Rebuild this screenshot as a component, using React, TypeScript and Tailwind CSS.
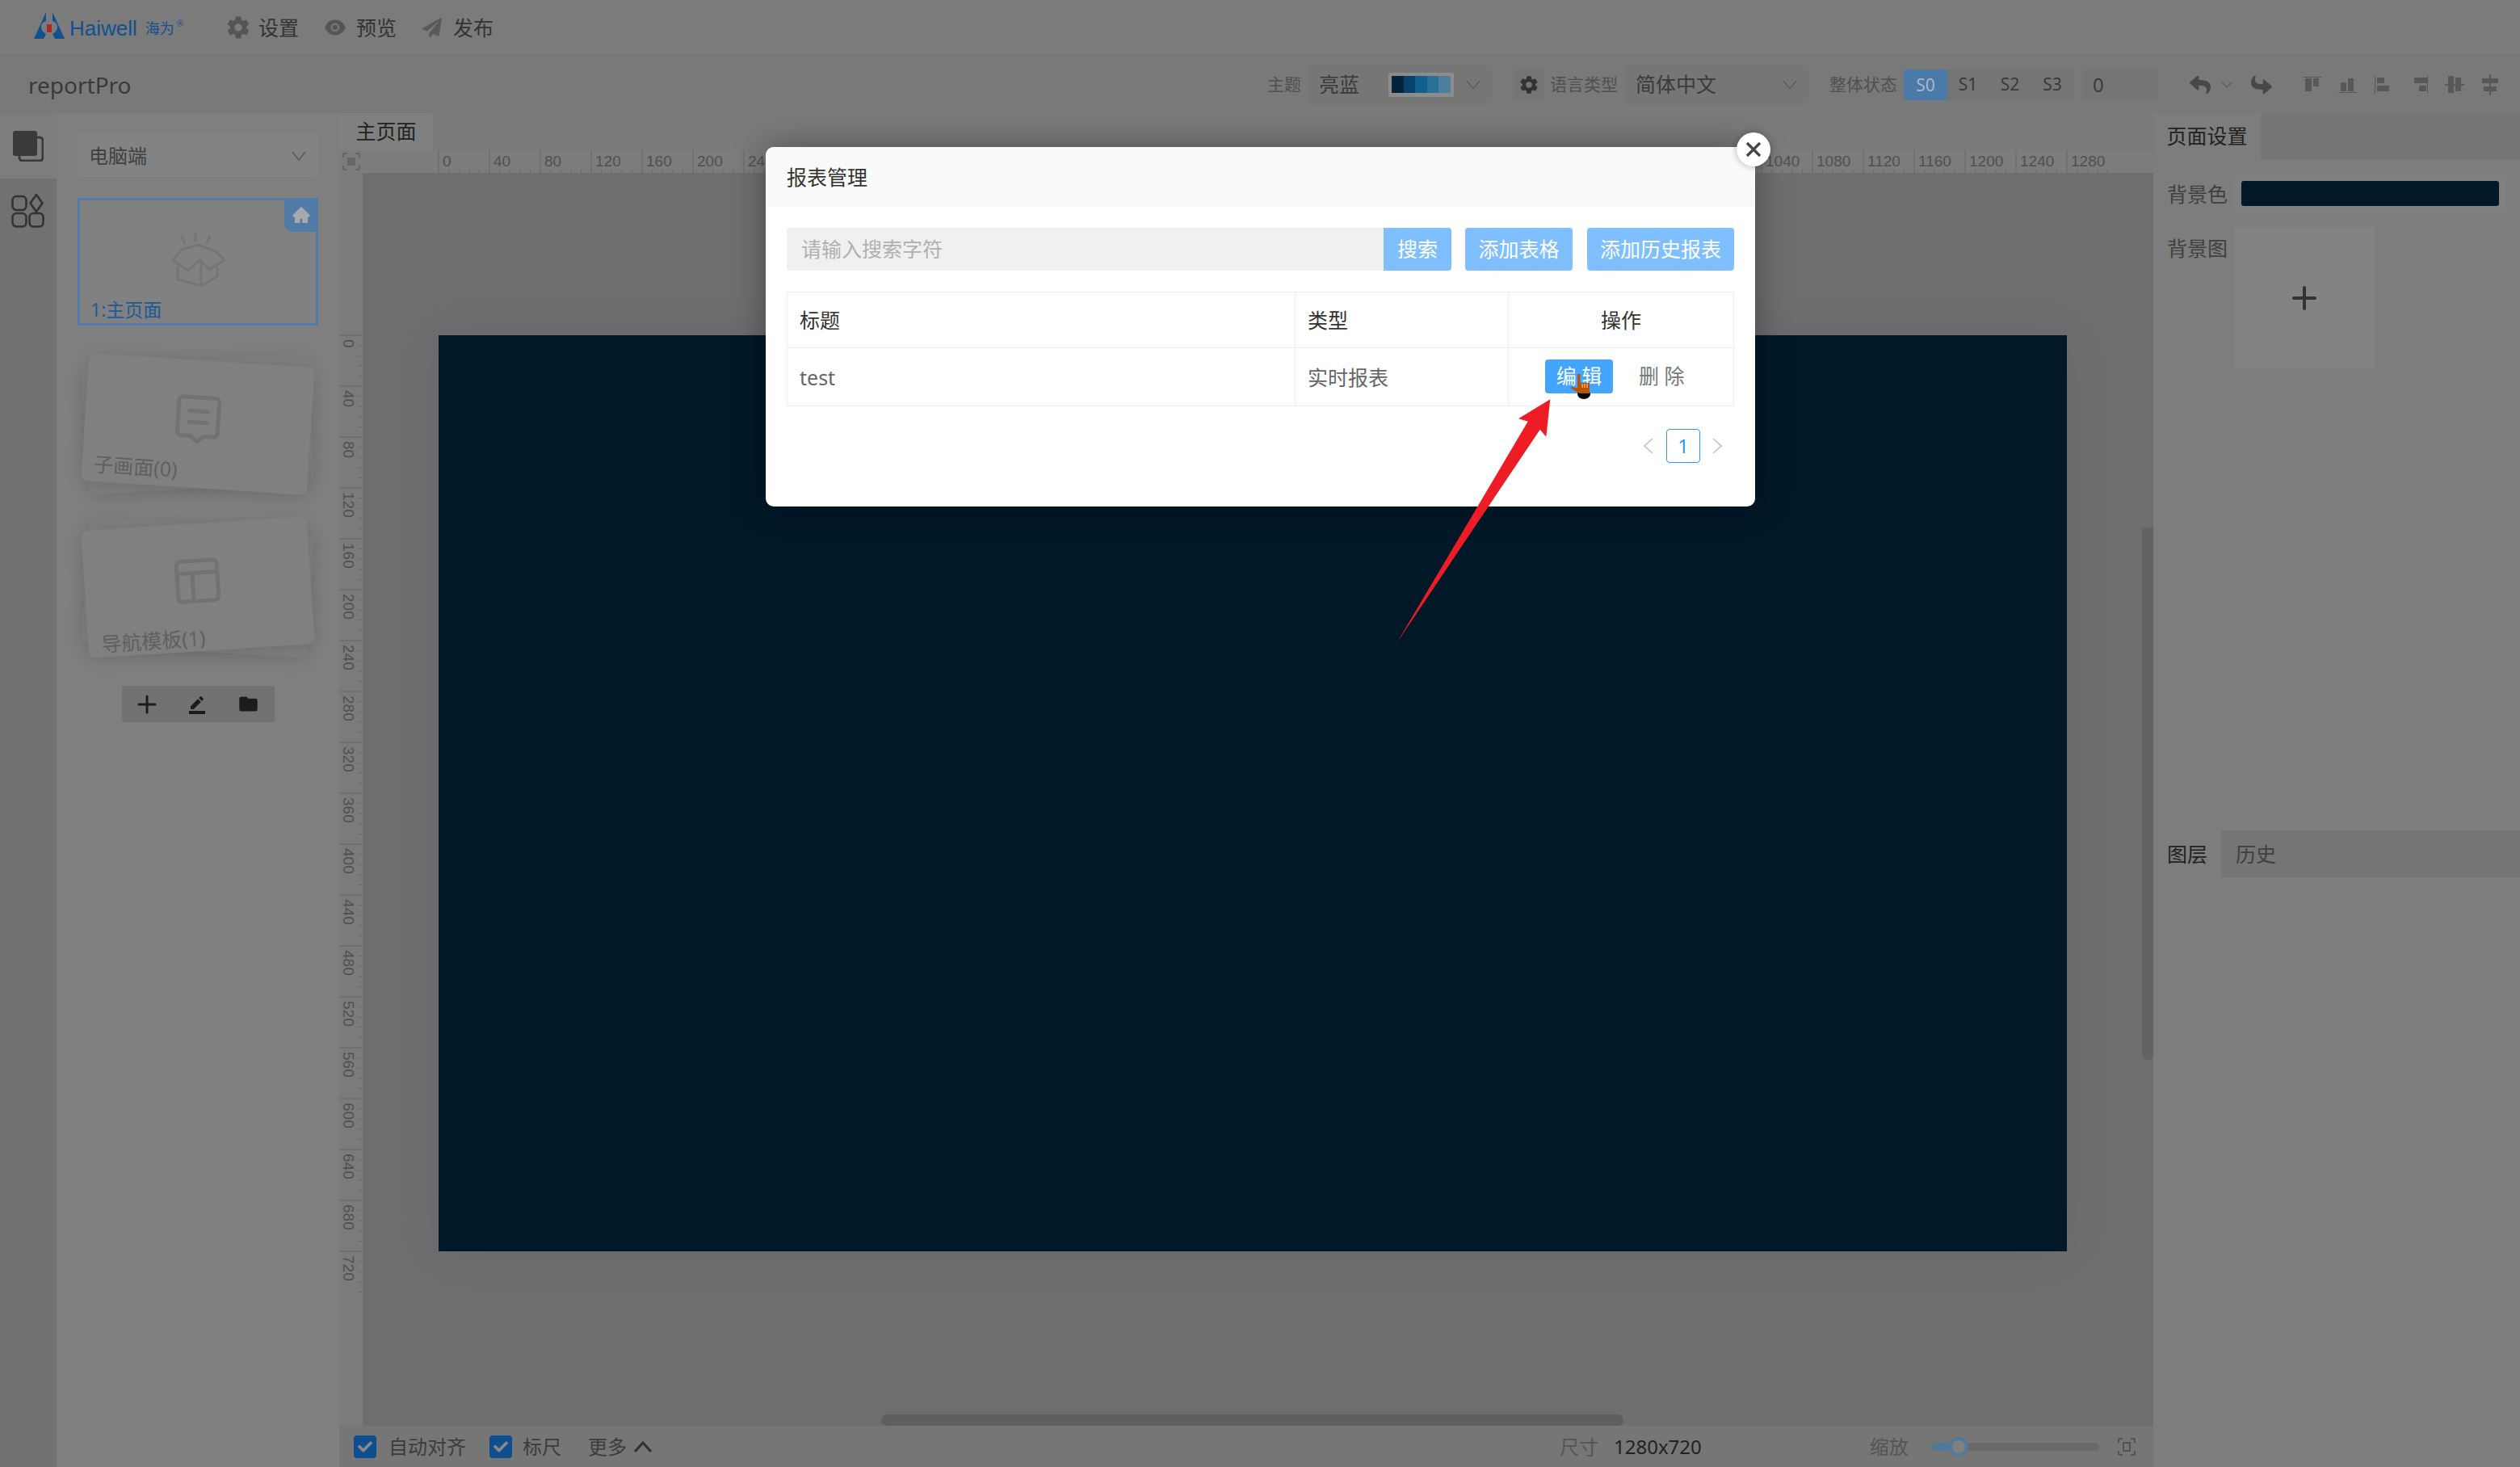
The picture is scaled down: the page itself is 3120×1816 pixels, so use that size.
import { AiFillEye, AiFillHome } from 'react-icons/ai';
import { FaPaperPlane, FaReply, FaCheck } from 'react-icons/fa';
import { IoSettingsSharp } from 'react-icons/io5';
import { MdBorderColor, MdFolder } from 'react-icons/md';

const H_LABELS = Array.from({ length: 33 }, (_, i) => i * 40);
const V_LABELS = Array.from({ length: 19 }, (_, i) => i * 40);
const STEP = 63;
const TICK = 12.6;

function Chevron({ className = '' }: { className?: string }) {
  return (
    <svg viewBox="0 0 18 12" className={`w-[18px] h-[12px] ${className}`} fill="none" stroke="currentColor" strokeWidth="1.6">
      <path d="M1 1l8 10 8-10" />
    </svg>
  );
}

function HorizontalRuler() {
  return (
    <svg width="2217" height="28" className="block">
      {H_LABELS.map((n, i) => {
        const x = 94 + i * STEP;
        return (
          <g key={n}>
            <line x1={x} x2={x} y1="0" y2="28" stroke="#666" />
            {[1, 2, 3, 4].map((t) => (
              <line key={t} x1={x + t * TICK} x2={x + t * TICK} y1="23" y2="28" stroke="#6a6a6a" />
            ))}
            <text x={x + 5} y="20" fontSize="19" fill="#505050" fontFamily="Liberation Sans">
              {n}
            </text>
          </g>
        );
      })}
    </svg>
  );
}

function VerticalRuler() {
  return (
    <svg width="29" height="1551" className="block">
      {V_LABELS.map((n, i) => {
        const y = 201 + i * STEP;
        return (
          <g key={n}>
            <line x1="0" x2="28" y1={y} y2={y} stroke="#666" />
            {[1, 2, 3, 4].map((t) => (
              <line key={t} x1="23" x2="28" y1={y + t * TICK} y2={y + t * TICK} stroke="#6a6a6a" />
            ))}
            <text transform={`translate(5 ${y + 5}) rotate(90)`} fontSize="19" fill="#505050" fontFamily="Liberation Sans">
              {n}
            </text>
          </g>
        );
      })}
    </svg>
  );
}

function FitIcon({ solid }: { solid?: boolean }) {
  return (
    <svg viewBox="0 0 22 22" className="w-[22px] h-[22px]" fill="none" stroke={solid ? '#5f5f5f' : '#4a4a4a'} strokeWidth="1.6">
      <path d="M1 6V2a1 1 0 011-1h4M16 1h4a1 1 0 011 1v4M21 16v4a1 1 0 01-1 1h-4M6 21H2a1 1 0 01-1-1v-4" />
      {solid ? <rect x="6" y="6" width="10" height="10" fill="#666" stroke="none" /> : <rect x="7" y="6" width="8" height="10" />}
    </svg>
  );
}

function AlignIcon({ kind }: { kind: number }) {
  const fill = '#585858';
  return (
    <svg viewBox="0 0 24 26" className="w-[24px] h-[26px]">
      {kind === 0 && (
        <g fill={fill}>
          <rect x="0" y="3" width="23" height="1" />
          <rect x="3" y="5" width="8" height="16" />
          <rect x="13" y="5" width="7" height="10" />
        </g>
      )}
      {kind === 1 && (
        <g fill={fill}>
          <rect x="0" y="22" width="23" height="1" />
          <rect x="3" y="10" width="7" height="11" />
          <rect x="12" y="5" width="7" height="16" />
        </g>
      )}
      {kind === 2 && (
        <g fill={fill}>
          <rect x="1" y="2" width="1" height="22" />
          <rect x="4" y="4" width="9" height="7" />
          <rect x="4" y="14" width="15" height="7" />
        </g>
      )}
      {kind === 3 && (
        <g fill={fill}>
          <rect x="22" y="2" width="1" height="22" />
          <rect x="6" y="4" width="16" height="7" />
          <rect x="12" y="14" width="9" height="7" />
        </g>
      )}
      {kind === 4 && (
        <g fill={fill}>
          <rect x="0" y="12" width="25" height="2" />
          <rect x="4" y="2" width="7" height="21" />
          <rect x="13" y="4" width="7" height="17" />
        </g>
      )}
      {kind === 5 && (
        <g fill={fill}>
          <rect x="11" y="0" width="2" height="26" />
          <rect x="2" y="5" width="20" height="6" />
          <rect x="4" y="15" width="16" height="6" />
        </g>
      )}
    </svg>
  );
}

function PageCard({ label, rotate, icon, textClass }: { label: string; rotate: 'cw' | 'ccw'; icon: React.ReactNode; textClass: string }) {
  return (
    <div className="relative w-[280px] h-[158px] ml-[9px]">
      <div
        className={`absolute inset-0 rounded-[8px] bg-[#7d7d7d] shadow-[0_4px_20px_rgba(0,0,0,0.1)] ${
          rotate === 'cw' ? '-rotate-[3.75deg]' : 'rotate-[3.75deg]'
        }`}
      />
      <div
        className={`absolute inset-0 rounded-[8px] bg-[#808080] shadow-[0_4px_20px_rgba(0,0,0,0.1)] ${
          rotate === 'cw' ? 'rotate-[3.75deg]' : '-rotate-[3.75deg]'
        }`}
      >
        <div className="absolute left-[112px] top-[43px]">{icon}</div>
        <span className={`absolute text-[25px] leading-[34px] text-[#606060] ${textClass}`}>{label}</span>
      </div>
    </div>
  );
}

function Logo() {
  return (
    <div className="flex items-center ml-[42px] w-[198px] pt-[2px]">
      <svg viewBox="0 0 38 36" className="w-[38px] h-[36px] -mt-[5px]">
        <path d="M15 0L0 33h12l3-6c-4-2-6-5-6-9s3-6 6-7zM23 0l15 33H26l-3-6c4-2 6-5 6-9s-3-6-6-7z" fill="#12508f" />
        <rect x="16" y="15" width="6" height="10" fill="#a52a2a" />
      </svg>
      <span className="ml-[6px] text-[26px] leading-none text-[#12508f] font-['Liberation_Sans',sans-serif]">Haiwell</span>
      <span className="ml-[10px] text-[18px] leading-none text-[#12508f]">海为</span>
      <span className="text-[10px] leading-none text-[#12508f] -mt-[12px] ml-[3px]">®</span>
    </div>
  );
}

function TopMenu() {
  return (
    <div className="flex items-center h-[69px] bg-[#7b7b7b] border-b border-[#757575] text-[25px] text-[#333]">
      <Logo />
      <div className="flex items-center ml-[40px] gap-[10px]">
        <IoSettingsSharp className="w-[30px] h-[30px] text-[#555]" />
        <span className="pt-[2px]">设置</span>
      </div>
      <div className="flex items-center ml-[30px] gap-[11px]">
        <AiFillEye className="w-[30px] h-[30px] text-[#555]" />
        <span className="pt-[2px]">预览</span>
      </div>
      <div className="flex items-center ml-[32px] gap-[14px]">
        <FaPaperPlane className="w-[24px] h-[24px] text-[#5a5a5a]" />
        <span className="pt-[2px]">发布</span>
      </div>
    </div>
  );
}

function Toolbar() {
  return (
    <div className="flex items-center justify-between h-[71px] bg-[#797979] pl-[35px] pr-[25px] text-[#3a3a3a]">
      <span className="text-[28px] leading-none">reportPro</span>
      <div className="flex items-center">
        <span className="w-[42px] text-[21px] text-[#505050]">主题</span>
        <div className="flex items-center ml-[9px] w-[227px] h-[49px] rounded-[4px] bg-[#767676] pl-[13px] text-[25px]">
          <span className="w-[86px]">亮蓝</span>
          <div className="flex items-center justify-center w-[81px] h-[30px] bg-[#8c8c8c] rounded-[2px]">
            <div className="w-[73px] h-[21px] bg-[linear-gradient(90deg,#04233c_0_20%,#06426c_20%_40%,#0f5f8f_40%_60%,#2a7099_60%_80%,#4d7f9e_80%)]" />
          </div>
          <Chevron className="ml-[15px] text-[#5f5f5f]" />
        </div>
        <div className="flex items-center justify-center ml-[26px] w-[39px] h-[38px] rounded-[4px] bg-[#757575]">
          <IoSettingsSharp className="w-[24px] h-[24px] text-[#333]" />
        </div>
        <span className="ml-[7px] w-[84px] text-[21px] text-[#505050]">语言类型</span>
        <div className="flex items-center justify-between ml-[9px] w-[227px] h-[49px] rounded-[4px] bg-[#767676] pl-[13px] pr-[14px] text-[25px]">
          <span>简体中文</span>
          <Chevron className="text-[#5f5f5f]" />
        </div>
        <span className="ml-[26px] w-[85px] text-[21px] text-[#505050]">整体状态</span>
        <div className="flex items-center ml-[7px] w-[211px] h-[38px] rounded-[4px] bg-[#757575] text-[21px] text-center">
          <span className="w-[54px] h-[38px] leading-[38px] rounded-[4px] bg-[#4a7aa8] text-[#a9b8c6]">S0</span>
          <span className="w-[51px]">S1</span>
          <span className="w-[53px]">S2</span>
          <span className="w-[52px]">S3</span>
        </div>
        <div className="flex items-center ml-[9px] w-[95px] h-[38px] rounded-[4px] bg-[#757575] pl-[14px] text-[24px]">0</div>
        <FaReply className="ml-[39px] w-[26px] h-[26px] text-[#484848]" />
        <svg viewBox="0 0 14 8" className="ml-[13px] w-[14px] h-[8px] text-[#5f5f5f]" fill="none" stroke="currentColor" strokeWidth="1.6">
          <path d="M1 1l6 6 6-6" />
        </svg>
        <FaReply className="ml-[23px] w-[26px] h-[26px] rotate-180 text-[#484848]" />
        <div className="flex items-center ml-[38px] gap-[20px]">
          {[0, 1, 2, 3, 4, 5].map((k) => (
            <AlignIcon key={k} kind={k} />
          ))}
        </div>
      </div>
    </div>
  );
}

function LeftRail() {
  return (
    <div className="w-[70px] bg-[#717171] shrink-0">
      <div className="flex items-center justify-center h-[81px] bg-[#7d7d7d]">
        <svg viewBox="0 0 38 38" className="w-[38px] h-[38px]">
          <rect x="8" y="8" width="29" height="29" rx="4" fill="none" stroke="#3a3a3a" strokeWidth="3" />
          <rect x="0" y="0" width="30" height="31" rx="3" fill="#3a3a3a" />
        </svg>
      </div>
      <div className="flex justify-center pt-[19px]">
        <svg viewBox="0 0 42 42" className="w-[42px] h-[42px]" fill="none" stroke="#333" strokeWidth="2.6">
          <rect x="1.5" y="3" width="17" height="17" rx="5" />
          <path d="M31 1l7.5 10.5L31 22l-7.5-10.5z" strokeLinejoin="round" />
          <rect x="1.5" y="24" width="17" height="16.5" rx="5" />
          <rect x="22.5" y="24" width="17" height="16.5" rx="5" />
        </svg>
      </div>
    </div>
  );
}

function LeftPanel() {
  return (
    <div className="w-[350px] shrink-0 bg-[#7f7f7f] pl-[26px] pt-[26px]">
      <div className="flex items-center justify-between w-[298px] h-[53px] rounded-[4px] bg-[#838383] pl-[14px] pr-[15px] text-[24px] text-[#3f3f3f]">
        <span>电脑端</span>
        <Chevron className="text-[#5a5a5a]" />
      </div>
      <div className="relative flex flex-col w-[298px] h-[158px] mt-[26px] border-[3px] border-[#4f7ba6] bg-[#818181]">
        <div className="absolute -right-[3px] -top-[3px] flex items-center justify-center w-[42px] h-[42px] rounded-bl-[10px] bg-[#4f7ba6]">
          <AiFillHome className="w-[24px] h-[24px] text-[#a8a8a8]" />
        </div>
        <svg viewBox="0 0 66 66" className="w-[66px] h-[66px] ml-[114px] mt-[41px]" fill="none" stroke="#757575" strokeWidth="3" strokeLinejoin="round">
          <path d="M29 0v10M12 3l4 10M47 3l-4 10" />
          <path d="M1 33L12 20l20-6 22 8 11 11-19 12-11-13-15 14z" />
          <path d="M7 40v17l29 8 20-12V42M36 33v32" />
        </svg>
        <span className="mt-auto mb-[2px] pl-[13px] text-[23px] leading-[30px] text-[#1e5a96]">1:主页面</span>
      </div>
      <div className="flex flex-col gap-[44px] mt-[43px]">
        <PageCard
          label="子画面(0)"
          rotate="cw"
          textClass="left-[14px] bottom-[5px]"
          icon={
            <svg viewBox="0 0 56 60" className="w-[56px] h-[60px]" fill="none" stroke="#727272" strokeWidth="5" strokeLinejoin="round">
              <path d="M8 3h40a5 5 0 015 5v38a5 5 0 01-5 5H36l-8 7-8-7H8a5 5 0 01-5-5V8a5 5 0 015-5z" />
              <path d="M17 20h22M17 34h22" strokeLinecap="round" />
            </svg>
          }
        />
        <PageCard
          label="导航模板(1)"
          rotate="ccw"
          textClass="left-[16px] bottom-[0px]"
          icon={
            <svg viewBox="0 0 56 56" className="w-[56px] h-[56px]" fill="none" stroke="#727272" strokeWidth="5" strokeLinejoin="round">
              <rect x="3" y="3" width="50" height="50" rx="5" />
              <path d="M3 18h50M22 18v35" />
            </svg>
          }
        />
      </div>
      <div className="flex items-center justify-between w-[189px] h-[45px] mt-[43px] ml-[55px] rounded-[3px] bg-[#727272] px-[19px] text-[#1c1c1c]">
        <svg viewBox="0 0 24 24" className="w-[24px] h-[24px]" fill="none" stroke="currentColor" strokeWidth="3" strokeLinecap="round">
          <path d="M12 2v20M2 12h20" />
        </svg>
        <MdBorderColor className="w-[24px] h-[24px]" />
        <MdFolder className="w-[27px] h-[27px]" />
      </div>
    </div>
  );
}

function BottomBar() {
  return (
    <div className="flex items-center h-[51px] bg-[#767676] text-[24px] text-[#3c3c3c] shrink-0">
      <span className="flex items-center justify-center ml-[18px] w-[28px] h-[28px] rounded-[4px] bg-[#0f4f8f]">
        <FaCheck className="w-[18px] h-[18px] text-[#8a8a8a]" />
      </span>
      <span className="ml-[15px]">自动对齐</span>
      <span className="flex items-center justify-center ml-[29px] w-[28px] h-[28px] rounded-[4px] bg-[#0f4f8f]">
        <FaCheck className="w-[18px] h-[18px] text-[#8a8a8a]" />
      </span>
      <span className="ml-[13px]">标尺</span>
      <span className="ml-[33px]">更多</span>
      <svg viewBox="0 0 22 14" className="w-[22px] h-[14px] ml-[9px]" fill="none" stroke="#333" strokeWidth="3.2">
        <path d="M1 13L11 2l10 11" />
      </svg>
      <span className="ml-[1124px] text-[#555]">尺寸</span>
      <span className="ml-[19px] text-[#222]">1280x720</span>
      <span className="ml-[208px] text-[#555]">缩放</span>
      <div className="relative ml-[29px] w-[207px] h-[10px] rounded-full bg-[#696969]">
        <div className="h-full w-[30px] rounded-full bg-[#4f7a99]" />
        <div className="absolute left-[21px] -top-[7px] w-[24px] h-[24px] rounded-full bg-[#808080] border-[4px] border-[#4f7a99]" />
      </div>
      <span className="ml-[23px]">
        <FitIcon />
      </span>
    </div>
  );
}

function CenterArea() {
  return (
    <div className="flex flex-col w-[2246px] shrink-0">
      <div className="flex h-[46px] bg-[#7a7a7a] shrink-0">
        <div className="flex items-center justify-center w-[116px] rounded-t-[4px] bg-[#808080] text-[25px] text-[#222]">主页面</div>
      </div>
      <div className="flex h-[28px] bg-[#7c7c7c] shrink-0">
        <div className="flex items-center justify-center w-[29px]">
          <FitIcon solid />
        </div>
        <HorizontalRuler />
      </div>
      <div className="flex h-[1551px] shrink-0">
        <div className="w-[29px] bg-[#7b7b7b] shrink-0">
          <VerticalRuler />
        </div>
        <div className="relative flex-1 bg-[#6e6e6e] pl-[94px] pt-[201px]">
          <div className="w-[2016px] h-[1134px] bg-[#001828] shadow-[0_0_60px_rgba(0,0,0,0.06)]" />
          <div className="absolute right-0 top-[439px] w-[14px] h-[659px] rounded-b-full bg-[#636363]" />
          <div className="absolute left-[642px] bottom-0 w-[919px] h-[14px] rounded-full bg-[#5f5f5f]" />
        </div>
      </div>
      <BottomBar />
    </div>
  );
}

function RightPanel() {
  return (
    <div className="flex-1 bg-[#7d7d7d] text-[25px]">
      <div className="flex h-[57px] bg-[#757575]">
        <div className="flex items-center justify-center w-[133px] bg-[#7d7d7d] text-[#222]">页面设置</div>
      </div>
      <div className="flex items-center mt-[18px] pl-[17px] pr-[17px]">
        <span className="w-[83px] pt-[2px] text-[#404040]">背景色</span>
        <div className="flex-1 h-[49px] p-[9px] rounded-[4px] bg-[#808080]">
          <div className="h-full rounded-[3px] bg-[#001828]" />
        </div>
      </div>
      <div className="flex mt-[17px] pl-[17px]">
        <span className="w-[83px] text-[#404040] pt-[8px]">背景图</span>
        <div className="flex items-center justify-center w-[174px] h-[175px] rounded-[4px] bg-[#838383]">
          <svg viewBox="0 0 30 30" className="w-[30px] h-[30px]" fill="none" stroke="#333" strokeWidth="4" strokeLinecap="round">
            <path d="M15 2v26M2 15h26" />
          </svg>
        </div>
      </div>
      <div className="flex h-[58px] mt-[572px] bg-[#757575]">
        <div className="flex items-center justify-center w-[84px] pt-[2px] bg-[#7d7d7d] text-[#222]">图层</div>
        <div className="flex items-center pl-[18px] pt-[2px] text-[#404040]">历史</div>
      </div>
    </div>
  );
}

function ReportModal() {
  return (
    <div className="absolute left-[948px] top-[182px] w-[1225px] h-[445px] rounded-[10px] bg-white text-[25px] shadow-[0_0_40px_rgba(0,0,0,0.35)]">
      <div className="flex items-center h-[74px] pl-[26px] pt-[2px] rounded-t-[10px] bg-[#fafafa] text-[#333]">报表管理</div>
      <div className="px-[26px] pt-[26px]">
        <div className="flex h-[53px]">
          <div className="flex items-center w-[739px] pl-[18px] rounded-l-[4px] bg-[#f0f0f0] text-[#b0b0b0]">请输入搜索字符</div>
          <button className="w-[84px] rounded-r-[4px] bg-[#80bfff] text-white">搜索</button>
          <button className="w-[133px] ml-[17px] rounded-[4px] bg-[#80bfff] text-white">添加表格</button>
          <button className="w-[182px] ml-[18px] rounded-[4px] bg-[#80bfff] text-white">添加历史报表</button>
        </div>
        <div className="grid grid-cols-[629px_264px_280px] mt-[26px] border border-[#eee] text-[#333]">
          <div className="flex items-center h-[69px] pl-[15px] pt-[2px] border-r border-b border-[#eee]">标题</div>
          <div className="flex items-center h-[69px] pl-[15px] pt-[2px] border-r border-b border-[#eee]">类型</div>
          <div className="flex items-center justify-center h-[69px] pt-[2px] pr-[2px] border-b border-[#eee]">操作</div>
          <div className="flex items-center h-[71px] pl-[15px] pt-[2px] border-r border-[#eee] text-[#666]">test</div>
          <div className="flex items-center h-[71px] pl-[15px] pt-[2px] border-r border-[#eee] text-[#666]">实时报表</div>
          <div className="flex items-center h-[71px] pl-[45px] pb-[1px]">
            <button className="w-[84px] h-[42px] rounded-[4px] bg-[#42a5ff] text-white">编 辑</button>
            <span className="ml-[32px] text-[#777]">删 除</span>
          </div>
        </div>
        <div className="flex items-center justify-end mt-[28px] pr-[15px]">
          <svg viewBox="0 0 12 20" className="w-[12px] h-[20px]" fill="none" stroke="#c4c4c4" strokeWidth="1.6">
            <path d="M11 1L1 10l10 9" />
          </svg>
          <div className="flex items-center justify-center w-[42px] h-[42px] ml-[16px] rounded-[4px] border border-[#2f96f3] text-[#2f96f3] text-[24px]">1</div>
          <svg viewBox="0 0 12 20" className="w-[12px] h-[20px] ml-[15px]" fill="none" stroke="#c4c4c4" strokeWidth="1.6">
            <path d="M1 1l10 9-10 9" />
          </svg>
        </div>
      </div>
    </div>
  );
}

export default function App() {
  return (
    <div className="relative w-[3120px] h-[1816px] overflow-hidden bg-[#7b7b7b] font-['Noto_Sans','Noto_Sans_CJK_SC',sans-serif]">
      <TopMenu />
      <Toolbar />
      <div className="flex h-[1676px]">
        <LeftRail />
        <LeftPanel />
        <CenterArea />
        <RightPanel />
      </div>

      <ReportModal />

      {/* close button sits on the corner of the modal */}
      <div className="absolute left-[2150px] top-[164px] flex items-center justify-center w-[42px] h-[42px] rounded-full bg-white shadow-[0_0_8px_rgba(0,0,0,0.3)]">
        <svg viewBox="0 0 20 20" className="w-[20px] h-[20px]" fill="none" stroke="#444" strokeWidth="3.2">
          <path d="M2 2l16 16M18 2L2 18" />
        </svg>
      </div>

      {/* annotation arrow */}
      <svg viewBox="0 0 205 310" className="absolute left-[1720px] top-[490px] w-[205px] h-[310px]">
        <polygon points="199.3,4.3 160,28.3 171.7,31.7 9.3,306 186.7,41.7 194.3,50.7" fill="#ee1c25" />
      </svg>

      {/* mouse pointer */}
      <svg viewBox="0 0 32 36" className="absolute left-[1940px] top-[460px] w-[32px] h-[36px]">
        <ellipse cx="21" cy="28" rx="8" ry="6" fill="#000" />
        <path d="M13 3h3.5v11H28v13H16L5 21v-2l8 1z" fill="#b85500" />
        <path d="M19 15v5M22 15v5M25 15v5" stroke="#fff" strokeWidth="0.8" />
      </svg>
    </div>
  );
}
